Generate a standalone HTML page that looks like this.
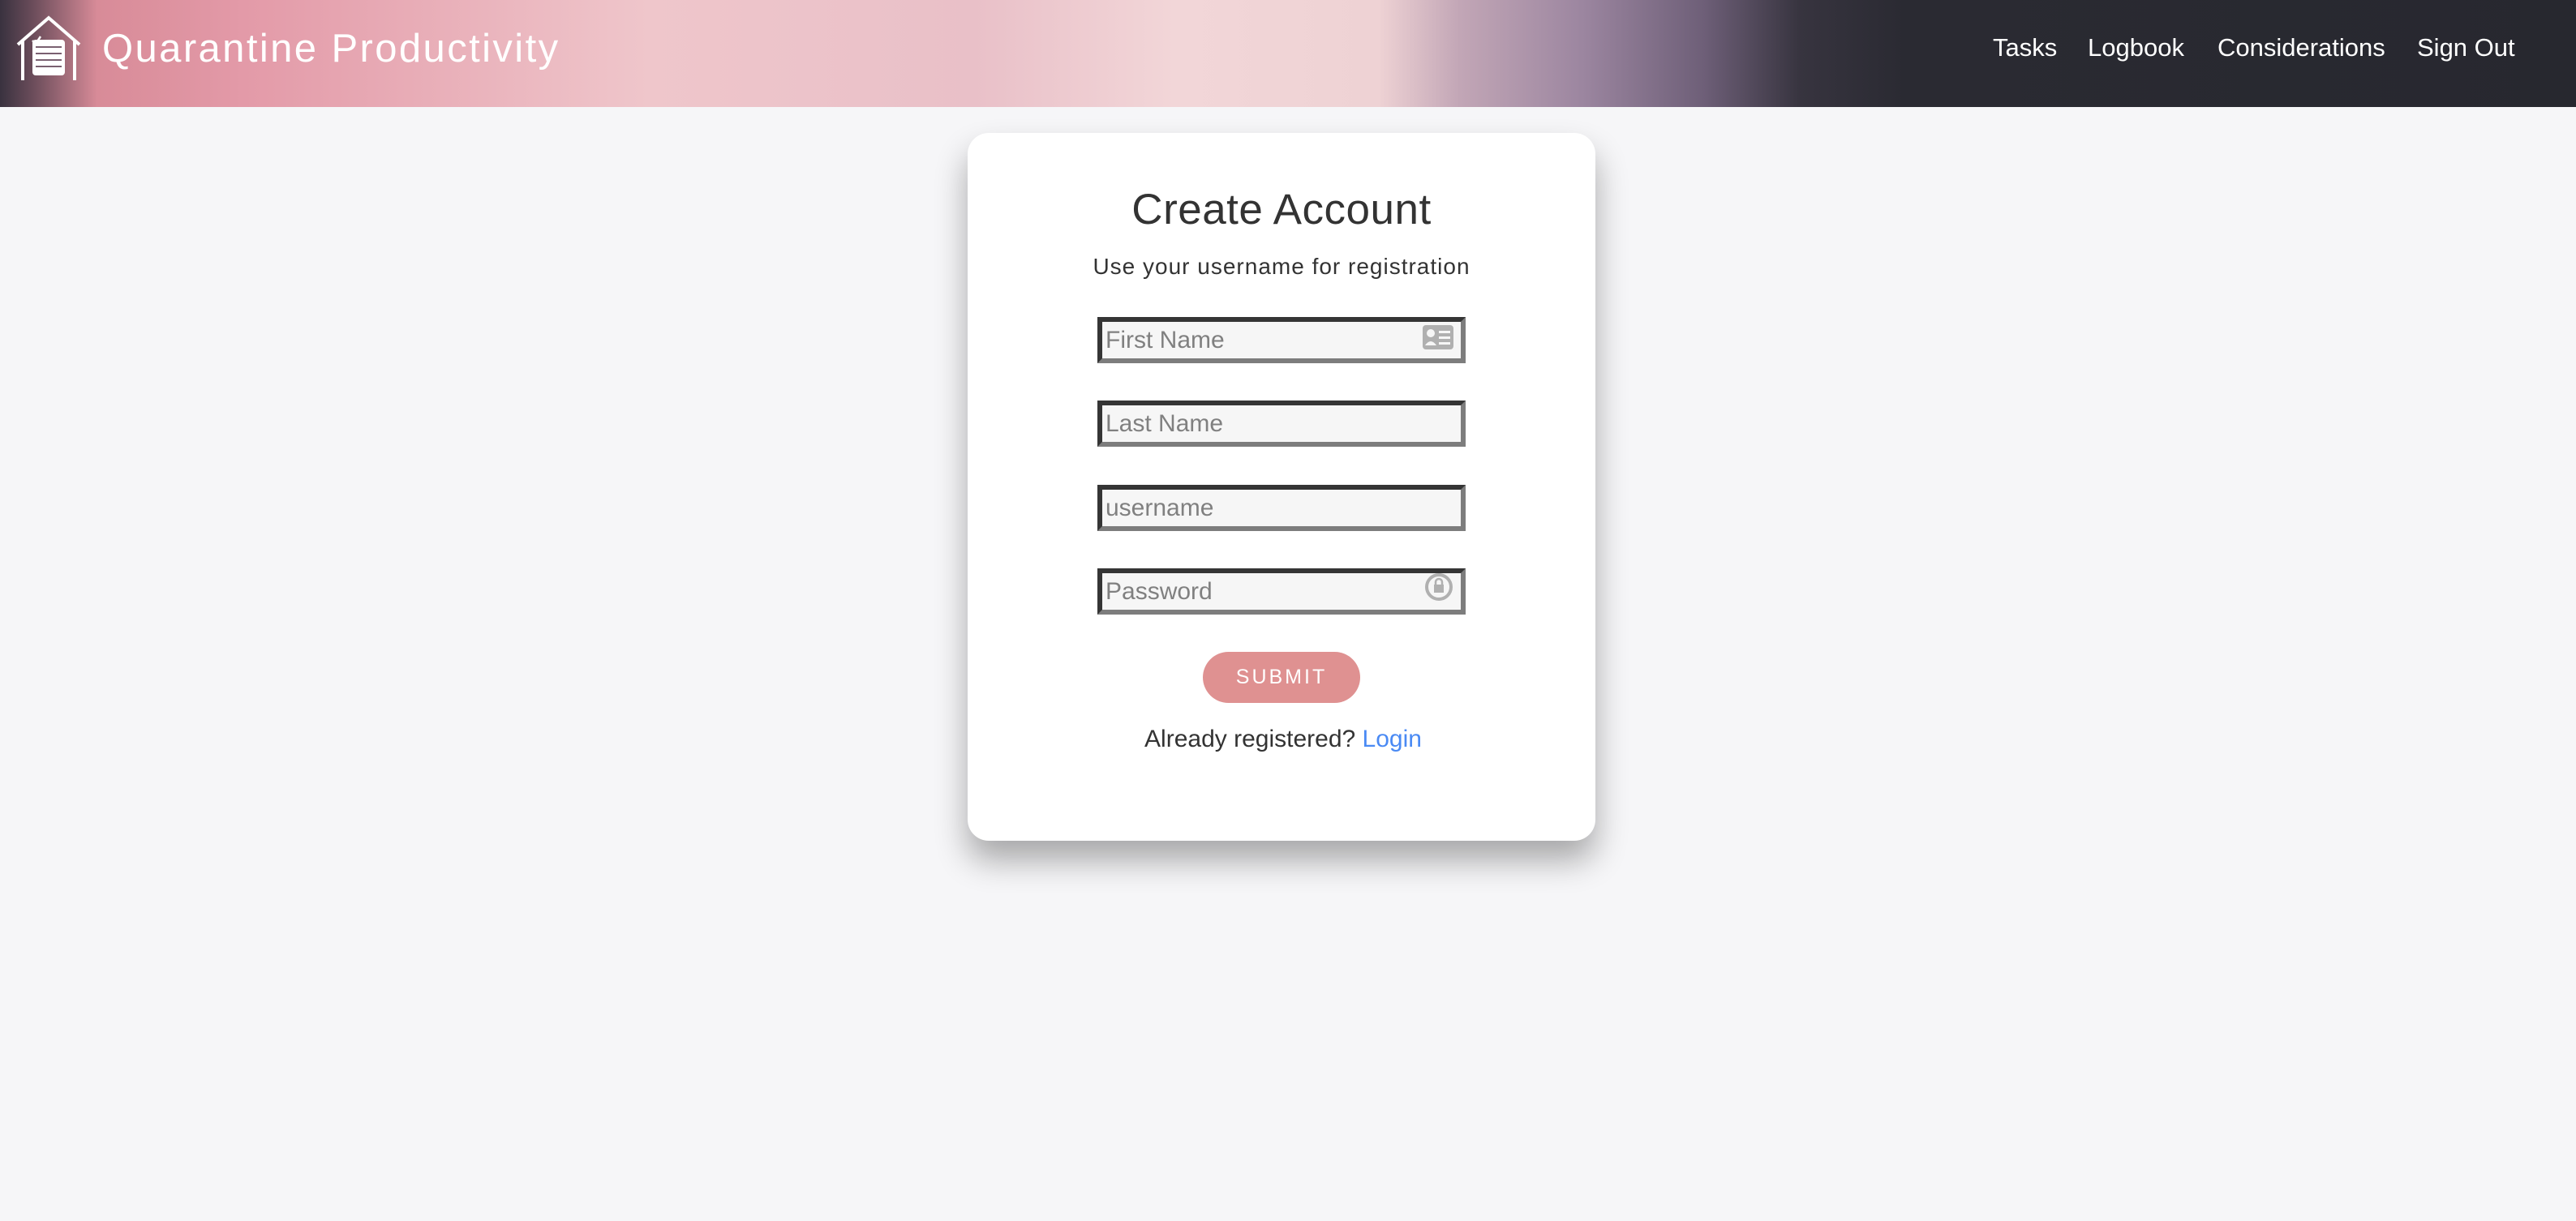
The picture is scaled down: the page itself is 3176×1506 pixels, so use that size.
<!DOCTYPE html>
<html><head><meta charset="utf-8"><style>
html,body{margin:0;padding:0}
body{width:3176px;height:1506px;background:#f6f6f8;font-family:"Liberation Sans","Noto Sans CJK SC",sans-serif;position:relative;overflow:hidden}
.hdr{position:absolute;left:0;top:0;width:3176px;height:132px;background:linear-gradient(90deg,#39323f 0px,#6a4c5a 40px,#d88b98 120px,#e39aa8 300px,#efc6cb 800px,#e9c0c8 1200px,#f2d6d8 1450px,#eed2d4 1700px,#c2a6b6 1800px,#9c86a0 1950px,#6e5f78 2100px,#37343f 2220px,#2a2a32 2350px,#27282f 3176px)}
.title{position:absolute;left:126px;top:30px;font-size:49px;letter-spacing:2.4px;color:#fff;line-height:60px}
.nav{position:absolute;top:39px;font-size:31px;color:#fff;line-height:40px}
.card{position:absolute;left:1193px;top:164px;width:774px;height:873px;background:#fff;border-radius:26px;box-shadow:0 24px 40px rgba(0,0,0,.32)}
.h1{position:absolute;left:0;text-align:center;top:226px;font-size:53px;letter-spacing:0.5px;color:#333;line-height:66px}
.sub{position:absolute;left:0;text-align:center;top:311px;font-size:28px;letter-spacing:1px;color:#333;line-height:36px}
.inp{position:absolute;left:1353px;width:454px;height:57px;box-sizing:border-box;border:6px solid;border-color:#353535 #7d7d7d #7d7d7d #353535;background:#f6f6f6;font-size:30px;color:#808080;line-height:45px;padding-left:4px}
.btn{position:absolute;left:1483px;top:804px;width:194px;height:63px;border-radius:32px;background:#df9191;color:#fff;font-size:25px;letter-spacing:3px;text-align:center;line-height:63px}
.log{position:absolute;left:0;width:3176px;text-align:center;top:892px;font-size:30px;color:#333;line-height:40px;padding-right:12px;box-sizing:border-box}
.log span{color:#4a8af4}
</style></head><body>
<div class="hdr"></div>
<svg style="position:absolute;left:0;top:0" width="120" height="120" viewBox="0 0 120 120">
<g fill="none" stroke="#fff" stroke-width="4">
<polyline points="22,55 60,22 98,55"/>
<line x1="28" y1="50" x2="28" y2="99"/><line x1="92" y1="50" x2="92" y2="99"/>
<rect x="40" y="49" width="40" height="44" rx="4" fill="#fff" stroke="none"/>
<polyline points="40,50 44,54 50,45" stroke-width="2.5"/>
</g>
<g stroke="#7a6070" stroke-width="2"><line x1="44" y1="58" x2="76" y2="58"/><line x1="44" y1="66" x2="76" y2="66"/><line x1="44" y1="74" x2="76" y2="74"/><line x1="44" y1="82" x2="76" y2="82"/></g>
</svg>
<div class="title">Quarantine Productivity</div>
<div class="nav" style="left:2457px">Tasks</div>
<div class="nav" style="left:2574px">Logbook</div>
<div class="nav" style="left:2734px">Considerations</div>
<div class="nav" style="left:2980px">Sign Out</div>
<div class="card"></div>
<div class="h1" style="width:3160px">Create Account</div>
<div class="sub" style="width:3160px">Use your username for registration</div>
<div class="inp" style="top:391px">First Name</div>
<div class="inp" style="top:494px">Last Name</div>
<div class="inp" style="top:598px">username</div>
<div class="inp" style="top:701px">Password</div>
<svg style="position:absolute;left:1753px;top:400px" width="42" height="36" viewBox="0 0 42 36"><rect x="1" y="1" width="38" height="30" rx="4" fill="#b0b0b0"/><circle cx="11" cy="11" r="5" fill="#f6f6f6"/><path d="M4 26 q7-10 14 0z" fill="#f6f6f6"/><rect x="21" y="8" width="14" height="3" fill="#f6f6f6"/><rect x="21" y="15" width="14" height="3" fill="#f6f6f6"/><rect x="21" y="22" width="14" height="3" fill="#f6f6f6"/></svg>
<svg style="position:absolute;left:1754px;top:704px" width="40" height="42" viewBox="0 0 40 42"><circle cx="20" cy="20" r="15" fill="none" stroke="#b0b0b0" stroke-width="4"/><rect x="14" y="17" width="12" height="10" fill="#b0b0b0"/><path d="M16 17 v-3 a4 4 0 0 1 8 0 v3" fill="none" stroke="#b0b0b0" stroke-width="2.5"/></svg>
<div class="btn">SUBMIT</div>
<div class="log">Already registered? <span>Login</span></div>
</body></html>
